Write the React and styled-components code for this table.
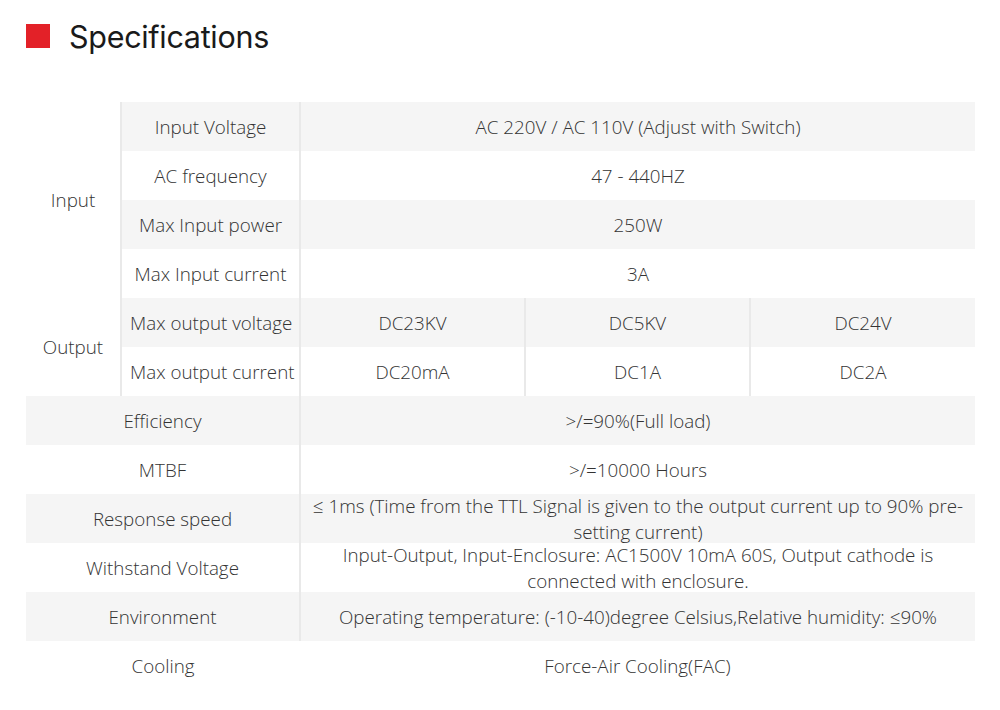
import React from "react"
import styled, { createGlobalStyle } from "styled-components"

const GlobalStyle = createGlobalStyle`
  body {
    margin: 0;
    background: #fff;
    font-family: "Open Sans", "Liberation Sans", sans-serif;
    color: #333;
  }
`

const Page = styled.div`
  width: 1000px;
  height: 710px;
  padding: 0 25px 0 26px;
  box-sizing: border-box;
  overflow: hidden;
`

const Title = styled.h1`
  display: flex;
  align-items: center;
  gap: 19px;
  margin: 0;
  padding-top: 17px;
  height: 38px;
  font-family: "Inter", "Liberation Sans", sans-serif;
  font-size: 30.5px;
  font-weight: 400;
  letter-spacing: -0.3px;
  color: #1a1a1a;
`

const Mark = styled.span`
  width: 24px;
  height: 24px;
  background: #e32128;
  flex: none;
`

const Table = styled.table`
  margin-top: 47px;
  width: 949px;
  border-collapse: collapse;
  table-layout: fixed;
  font-size: 18.8px;
  font-weight: 300;
`

const Cell = styled.td`
  height: 49px;
  padding: 0 8px;
  box-sizing: border-box;
  text-align: center;
  vertical-align: middle;
  line-height: 26px;
  background: ${p => (p.$shade ? "#f5f5f5" : "#fff")};
  border-right: ${p => (p.$last ? "none" : "2px solid #e9e9e9")};
  white-space: ${p => (p.$nowrap ? "nowrap" : "normal")};
`

const Tight = styled.div`
  height: 49px;
  display: flex;
  align-items: center;
  justify-content: center;
`

const groups = [
  {
    name: "Input",
    rows: [
      ["Input Voltage", ["AC 220V / AC 110V (Adjust with Switch)"]],
      ["AC frequency", ["47 - 440HZ"]],
      ["Max Input power", ["250W"]],
      ["Max Input current", ["3A"]],
    ],
  },
  {
    name: "Output",
    rows: [
      ["Max output voltage", ["DC23KV", "DC5KV", "DC24V"]],
      ["Max output current", ["DC20mA", "DC1A", "DC2A"]],
    ],
  },
]

const general = [
  ["Efficiency", ">/=90%(Full load)"],
  ["MTBF", ">/=10000 Hours"],
  ["Response speed", "≤ 1ms (Time from the TTL Signal is given to the output current up to 90% pre-setting current)"],
  ["Withstand Voltage", "Input-Output, Input-Enclosure: AC1500V 10mA 60S, Output cathode is connected with enclosure."],
  ["Environment", "Operating temperature: (-10-40)degree Celsius,Relative humidity: ≤90%"],
  ["Cooling", "Force-Air Cooling(FAC)"],
]

export default function App() {
  let index = 0
  return (
    <Page>
      <GlobalStyle />
      <Title>
        <Mark />
        Specifications
      </Title>
      <Table>
        <colgroup>
          <col style={{ width: 95 }} />
          <col style={{ width: 179 }} />
          <col style={{ width: 225 }} />
          <col style={{ width: 225 }} />
          <col style={{ width: 225 }} />
        </colgroup>
        <tbody>
          {groups.map(group =>
            group.rows.map(([label, values], i) => {
              const shade = index++ % 2 === 0
              return (
                <tr key={label}>
                  {i === 0 && <Cell rowSpan={group.rows.length}>{group.name}</Cell>}
                  <Cell $shade={shade} $nowrap>{label}</Cell>
                  {values.length === 1 ? (
                    <Cell $shade={shade} $last colSpan={3}>{values[0]}</Cell>
                  ) : (
                    values.map((v, j) => (
                      <Cell key={v} $shade={shade} $last={j === values.length - 1}>{v}</Cell>
                    ))
                  )}
                </tr>
              )
            })
          )}
          {general.map(([label, value], i) => {
            const shade = i % 2 === 0
            const end = i === general.length - 1
            return (
              <tr key={label}>
                <Cell $shade={shade} $last={end} colSpan={2}>{label}</Cell>
                <Cell $shade={shade} $last colSpan={3}>
                  <Tight>{value}</Tight>
                </Cell>
              </tr>
            )
          })}
        </tbody>
      </Table>
    </Page>
  )
}
